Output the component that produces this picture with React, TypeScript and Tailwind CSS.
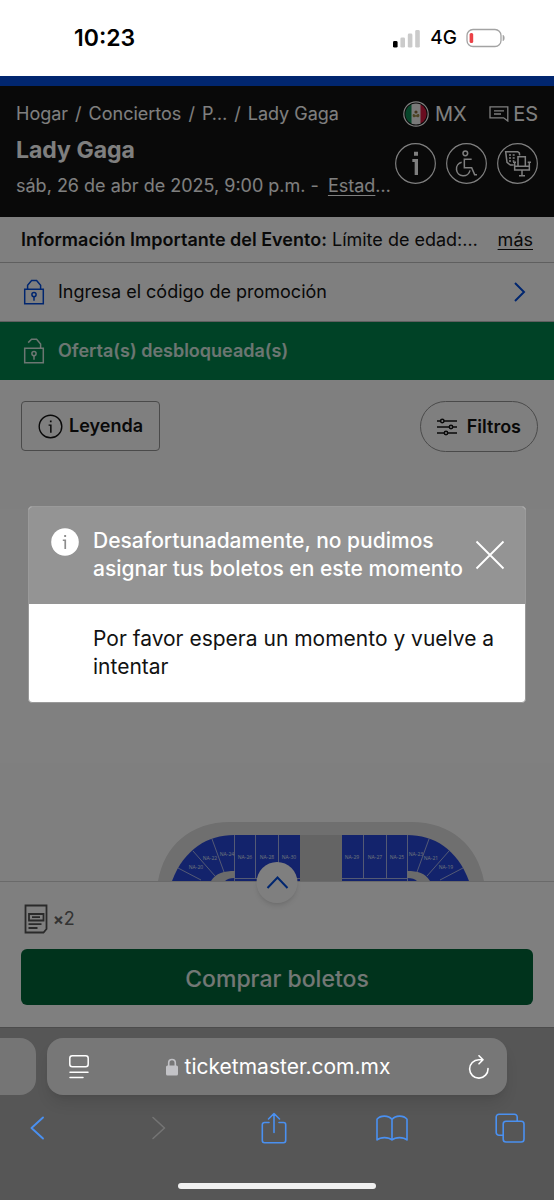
import React from "react";

type IconProps = { className?: string };

function SignalIcon() {
  return (
    <svg className="h-[19px] w-7" viewBox="0 0 28 19" aria-hidden="true">
      <rect x="0" y="12" width="4.6" height="6.6" rx="1.4" fill="#000" />
      <rect x="7.4" y="8.4" width="4.6" height="10.2" rx="1.4" fill="#cbcbcb" />
      <rect x="14.8" y="4.6" width="4.6" height="14" rx="1.4" fill="#cbcbcb" />
      <rect x="22.2" y="1" width="4.6" height="17.6" rx="1.4" fill="#cbcbcb" />
    </svg>
  );
}

function BatteryIcon() {
  return (
    <svg className="h-5 w-10" viewBox="0 0 40 20" aria-hidden="true">
      <rect x="1" y="1.5" width="34" height="17" rx="6" fill="none" stroke="#a3a3a3" strokeWidth="1.3" />
      <path d="M37 7.2c1.7.5 1.7 5.1 0 5.600z" fill="#a3a3a3" stroke="#a3a3a3" strokeWidth=".6" />
      <rect x="3.600" y="5" width="3.600" height="10" rx="1.6" fill="#eb4147" />
    </svg>
  );
}

function FlagIcon() {
  return (
    <svg className="size-[26px]" viewBox="0 0 26 26" aria-hidden="true">
      <defs>
        <clipPath id="flag">
          <circle cx="13" cy="13" r="10.6" />
        </clipPath>
      </defs>
      <circle cx="13" cy="13" r="12.2" fill="#111" stroke="#fff" strokeWidth="1.2" />
      <g clipPath="url(#flag)">
        <rect width="9" height="26" fill="#0f8a55" />
        <rect x="8.500" width="9.500" height="26" fill="#f4f4f4" />
        <rect x="17.500" width="9" height="26" fill="#d3183f" />
        <circle cx="13" cy="11" r="1.600" fill="#8a6a3a" />
        <path d="M9.600 14.500c0-2 2-2 3.400 0 1.400-2 3.400-2 3.400 0s-2 2.200-3.400 1c-1.400 1.200-3.400 1-3.400-1z" fill="#9a8a4a" />
      </g>
    </svg>
  );
}

function ChatIcon() {
  return (
    <svg className="h-4 w-5" viewBox="0 0 20 16" fill="none" stroke="#fff" strokeWidth="1.300" aria-hidden="true">
      <path d="M1 .8h17.800v14.200l-4.200-3.200H1z" />
      <path d="M5 4.800h10M5 8h7" />
    </svg>
  );
}

function InfoSlabIcon() {
  return (
    <svg className="size-[41px]" viewBox="0 0 123 123" aria-hidden="true">
      <circle cx="61.500" cy="61.500" r="59.500" fill="none" stroke="#fff" strokeWidth="3.500" />
      <path d="M57 26h12v12H57zM52 48h17v48H59V57h-7z" fill="#fff" />
    </svg>
  );
}

function WheelchairIcon() {
  return (
    <svg className="size-[41px]" viewBox="0 0 123 123" fill="none" stroke="#fff" strokeWidth="4.500" aria-hidden="true">
      <circle cx="61.500" cy="61.500" r="59.500" strokeWidth="3.500" />
      <circle cx="58" cy="31" r="7" />
      <path d="M77 49H55v25h22l9 21h7" />
      <path d="M47 58A20.500 20.500 0 1 0 72 82" />
    </svg>
  );
}

function SeatIcon() {
  return (
    <svg className="size-[41px]" viewBox="0 0 123 123" fill="none" stroke="#fff" strokeWidth="4.500" aria-hidden="true">
      <circle cx="61.500" cy="61.500" r="59.500" strokeWidth="3.500" />
      <path d="M68 37l-1-7-5-4H26l4 32 10 8h10" />
      <path d="M36 36h6M36 45h6M36 54h6M47 36h6M47 45h6M47 54h5" strokeWidth="5" />
      <path d="M63 70V41h22v29" />
      <path d="M52 70h46M53 58v23h44V58M48 58h9M92 58h10M75 81v17M66 98h18" />
    </svg>
  );
}

function LockIcon({ className }: IconProps) {
  return (
    <svg className={className} viewBox="0 0 22 26" fill="none" stroke="currentColor" strokeWidth="1.500" aria-hidden="true">
      <path d="M1.700 10.200h18.600v14.600H1.700z" />
      <path d="M4.600 10V6.200l4-4.700h5l4 4.700V10" />
      <circle cx="11" cy="15.600" r="2.100" />
      <path d="M11 17.700v4" />
    </svg>
  );
}

function UnlockIcon({ className }: IconProps) {
  return (
    <svg className={className} viewBox="0 0 22 26" fill="none" stroke="currentColor" strokeWidth="1.500" aria-hidden="true">
      <path d="M1.700 10.200h18.600v14.600H1.700z" />
      <path d="M5.200 4.600l3.400-3.300h5l4 4.700v4" />
      <circle cx="11" cy="15.600" r="2.100" />
      <path d="M11 17.700v4" />
    </svg>
  );
}

function Chevron({ className, d, width = 2 }: IconProps & { d: string; width?: number }) {
  return (
    <svg className={className} viewBox="0 0 24 24" fill="none" stroke="currentColor" strokeWidth={width} aria-hidden="true">
      <path d={d} />
    </svg>
  );
}

function StatusBar() {
  return (
    <div className="flex h-[76px] items-center justify-between bg-white pr-12 pl-[74px] text-black">
      <span className="text-[23px] font-semibold">10:23</span>
      <div className="flex items-center gap-[9px]">
        <SignalIcon />
        <span className="text-[19px] font-medium">4G</span>
        <BatteryIcon />
      </div>
    </div>
  );
}

function EventHeader() {
  return (
    <header className="border-t-[10px] border-[#024ddf] bg-[#121212] text-white">
      <div className="flex h-[131px] justify-between px-4 pt-3">
        <div className="min-w-0 flex-1 whitespace-nowrap">
          <nav aria-label="Ruta" className="flex gap-[7px] text-lg leading-8">
            <a href="#hogar">Hogar</a>
            <span>/</span>
            <a href="#conciertos">Conciertos</a>
            <span>/</span>
            <a href="#pop">P…</a>
            <span>/</span>
            <span>Lady Gaga</span>
          </nav>
          <h1 className="text-[23px] leading-10 font-bold">Lady Gaga</h1>
          <p className="text-lg leading-8">
            sáb, 26 de abr de 2025, 9:00 p.m. -{" "}
            <a href="#estadio" className="ml-1 underline underline-offset-3">Estad</a>…
          </p>
        </div>
        <div className="flex shrink-0 flex-col gap-4 pt-[3px]">
          <div className="flex items-center justify-between pl-2 text-xl leading-[26px]">
            <button type="button" className="flex items-center gap-[6px]">
              <FlagIcon />
              MX
            </button>
            <button type="button" className="flex items-center gap-1">
              <ChatIcon />
              ES
            </button>
          </div>
          <div className="flex gap-[10px]">
            <button type="button" aria-label="Información"><InfoSlabIcon /></button>
            <button type="button" aria-label="Accesibilidad"><WheelchairIcon /></button>
            <button type="button" aria-label="Asientos"><SeatIcon /></button>
          </div>
        </div>
      </div>
    </header>
  );
}

const sections = [
  { name: "NA-20", x: 196, y: 869 },
  { name: "NA-22", x: 210, y: 860 },
  { name: "NA-24", x: 227, y: 856 },
  { name: "NA-26", x: 245, y: 859 },
  { name: "NA-28", x: 267, y: 859 },
  { name: "NA-30", x: 289, y: 859 },
  { name: "NA-29", x: 352, y: 859 },
  { name: "NA-27", x: 375, y: 859 },
  { name: "NA-25", x: 397, y: 859 },
  { name: "NA-23", x: 416, y: 856 },
  { name: "NA-21", x: 431, y: 860 },
  { name: "NA-19", x: 446, y: 869 },
];

function VenueMap() {
  return (
    <svg className="block w-full" viewBox="0 819 554 62" role="img" aria-label="Mapa del recinto">
      <path d="M158 881C164 846 190 822 230 822H411C452 822 477 846 484 881z" fill="#dedede" />
      <path d="M300 835h42v46h-42z" fill="#c8c8c8" />
      <path d="M172 881C184 849 208 835 234 835h66v46z" fill="#2746d8" />
      <path d="M469 881C457 849 434 835 407 835h-65v46z" fill="#2746d8" />
      <path d="M211 881C216 873 224 871 235 871v7c-5 0-8 1-10 3z" fill="#d6d6d6" />
      <path d="M430 881C425 873 418 871 407 871v7c5 0 8 1 10 3z" fill="#d6d6d6" />
      <g stroke="#c9d0ee" strokeWidth=".8" fill="none">
        <path d="M178 868l23 12M193 851l22 25M212 839l12 33M234.500 835v46M255.500 835v43M278.500 835v43M235 878.500h65" />
        <path d="M463 868l-23 12M449 851l-22 25M429 839l-12 33M407.500 835v46M386.500 835v43M363.500 835v43M407 878.500h-65" />
      </g>
      <g fill="#dfe3f5" fontSize="5" textAnchor="middle" className="font-['Open_Sans',sans-serif]">
        {sections.map((s) => (
          <text key={s.name} x={s.x} y={s.y}>{s.name}</text>
        ))}
      </g>
    </svg>
  );
}

function PurchasePanel() {
  return (
    <section className="relative border-t border-[#d5d5d5] bg-white px-[21px] pt-[22px] pb-[22px]">
      <button
        type="button"
        aria-label="Mostrar boletos"
        className="absolute -top-5 left-1/2 flex size-[41px] -translate-x-1/2 items-center justify-center rounded-full bg-white text-[#024ddf] shadow-md"
      >
        <Chevron className="size-6" d="M2 17L12 6.500 22 17" />
      </button>
      <div className="flex items-center gap-[5px] pl-[3px] text-[#666]">
        <svg className="h-[30px] w-6" viewBox="0 0 24 30" fill="none" stroke="#555" strokeWidth="1.800" aria-hidden="true">
          <path d="M1.500 1.500h21v23.500l-3 3.500h-18z" />
          <path d="M5 10h14.500v6.500H5zM8 13.200h8M4.500 20.200h13M4.500 24h9" />
        </svg>
        <span className="text-lg leading-[30px]"><b className="text-base">×</b>2</span>
      </div>
      <button type="button" className="mt-[15px] h-14 w-full rounded-md bg-[#006638] pt-1 text-[23px] font-medium text-white/90">
        Comprar boletos
      </button>
    </section>
  );
}

function AlertDialog() {
  return (
    <div className="pointer-events-none fixed inset-0 flex items-center justify-center px-7 pt-2">
      <div role="alertdialog" aria-labelledby="alert-title" aria-describedby="alert-text" className="pointer-events-auto w-full overflow-hidden rounded border border-[#9a9a9a] bg-white">
        <div className="flex bg-[#949494] pt-5 pr-5 pb-[21px] pl-[22px] text-white">
          <svg className="mt-px size-7 shrink-0" viewBox="0 0 28 28" aria-hidden="true">
            <circle cx="14" cy="14" r="13.800" fill="#fff" />
            <path d="M13.200 7h1.900v2h-1.900zM11.800 11.600h3.300V21h-1.700v-8h-1.600z" fill="#8d8d8d" />
          </svg>
          <h2 id="alert-title" className="ml-[14px] flex-1 text-[21px] leading-7 font-medium whitespace-nowrap">
            Desafortunadamente, no pudimos
            <br />
            asignar tus boletos en este momento
          </h2>
          <button type="button" aria-label="Cerrar" className="-ml-4 self-center">
            <svg className="size-[30px]" viewBox="0 0 30 30" fill="none" stroke="#fff" strokeWidth="1.900" aria-hidden="true">
              <path d="M1.500 1.500l27 27M28.500 1.500l-27 27" />
            </svg>
          </button>
        </div>
        <p id="alert-text" className="py-[21px] pr-5 pl-16 text-[21px] leading-7 text-[#121212]">
          Por favor espera un momento y vuelve a intentar
        </p>
      </div>
    </div>
  );
}

function BrowserBar() {
  return (
    <footer className="h-[173px] shrink-0 overflow-hidden border-t border-[#4c4c4c] bg-[#565656] pt-[10px]">
      <div className="flex gap-[11px]">
        <div className="h-[57px] w-9 rounded-r-2xl bg-[#757575]" />
        <div className="flex h-[57px] flex-1 items-center justify-between rounded-2xl bg-[#777] pr-4 pl-[22px] text-white shadow-lg">
          <button type="button" aria-label="Opciones de página">
            <svg className="h-6 w-5" viewBox="0 0 20 24" fill="none" stroke="#fff" strokeWidth="1.500" strokeLinecap="round" aria-hidden="true">
              <rect x=".8" y=".8" width="18.400" height="11" rx="2.500" />
              <path d="M1 17.200h18M1 22.600h13" />
            </svg>
          </button>
          <a href="#ticketmaster" className="flex items-center gap-[7px] text-[21px]">
            <svg className="h-[18px] w-3" viewBox="0 0 12 18" aria-hidden="true">
              <path d="M2.700 8V4.800a3.300 3.300 0 0 1 6.600 0V8" fill="none" stroke="#c2c2c6" strokeWidth="1.600" />
              <rect y="7.500" width="12" height="10" rx="1.500" fill="#c2c2c6" />
            </svg>
            ticketmaster.com.mx
          </a>
          <button type="button" aria-label="Recargar">
            <svg className="h-6 w-6" viewBox="0 0 24 24" fill="none" stroke="#fff" strokeWidth="1.600" strokeLinecap="round" strokeLinejoin="round" aria-hidden="true">
              <path d="M21 13.500a9.200 9.200 0 1 1-9.200-8.800h4M12 .8l4 4-4 4" />
            </svg>
          </button>
        </div>
        <div className="w-9" />
      </div>
      <nav aria-label="Navegador" className="mt-[17px] flex h-8 items-center justify-between pr-7 pl-[21px] text-[#4a90f0]">
        <button type="button" aria-label="Atrás" className="flex w-8 justify-center">
          <svg className="h-6 w-4" viewBox="0 0 16 24" fill="none" stroke="currentColor" strokeWidth="1.900" strokeLinecap="round" strokeLinejoin="round"><path d="M14 1.500L2.500 12 14 22.500" /></svg>
        </button>
        <button type="button" aria-label="Adelante" disabled className="flex w-8 justify-end pr-1 text-[#747474]">
          <svg className="h-6 w-4" viewBox="0 0 16 24" fill="none" stroke="currentColor" strokeWidth="1.600" strokeLinecap="round" strokeLinejoin="round"><path d="M2 1.500L13.500 12 2 22.500" /></svg>
        </button>
        <button type="button" aria-label="Compartir" className="flex w-8 justify-center">
          <svg className="h-8 w-[26px]" viewBox="0 0 26 32" fill="none" stroke="currentColor" strokeWidth="1.600" strokeLinecap="round" strokeLinejoin="round"><path d="M8 10.500H3.500a2.200 2.200 0 0 0-2.200 2.200V28.500a2.200 2.200 0 0 0 2.200 2.200h19a2.200 2.200 0 0 0 2.200-2.200V12.700a2.200 2.200 0 0 0-2.200-2.200H18M13 20.500V1.500M7.500 7L13 1.500 18.500 7" /></svg>
        </button>
        <button type="button" aria-label="Marcadores" className="flex w-8 justify-center">
          <svg className="h-7 w-8" viewBox="0 0 32 28" fill="none" stroke="currentColor" strokeWidth="1.600" strokeLinejoin="round"><path d="M16 5.500C12.500 1 4.500 1 1 5.200V26c3.500-3.200 11.500-3.200 15 0 3.500-3.200 11.500-3.200 15 0V5.200C27.500 1 19.500 1 16 5.500zV26" /></svg>
        </button>
        <button type="button" aria-label="Pestañas" className="flex w-8 justify-center">
          <svg className="size-[30px]" viewBox="0 0 30 30" fill="none" stroke="currentColor" strokeWidth="1.600" strokeLinecap="round" strokeLinejoin="round"><rect x="8.200" y="8.200" width="20.800" height="20.800" rx="2.800" /><path d="M8 22.200H4A2.800 2.800 0 0 1 1.200 19.400V4A2.800 2.800 0 0 1 4 1.200H19.400A2.800 2.800 0 0 1 22.200 4V8" /></svg>
        </button>
      </nav>
      <div className="mx-auto mt-[39px] h-[6px] w-[198px] rounded-full bg-[#f0f0f0]" />
    </footer>
  );
}

export default function App() {
  return (
    <div className="flex min-h-screen flex-col bg-white font-['Inter',sans-serif] text-[#121212]">
      <StatusBar />
      <div className="relative flex flex-1 flex-col">
        <EventHeader />
        <div className="flex h-[46px] items-center justify-between gap-2 border-b border-[#bfbfbf] px-[21px] text-lg whitespace-nowrap">
          <p><b className="font-semibold">Información Importante del Evento:</b> Límite de edad:…</p>
          <a href="#mas" className="underline underline-offset-3">más</a>
        </div>
        <button type="button" className="flex h-[59px] items-center border-b border-[#bfbfbf] px-[23px] text-left text-lg">
          <LockIcon className="h-[26px] w-[22px] text-[#024ddf]" />
          <span className="ml-[13px] flex-1">Ingresa el código de promoción</span>
          <Chevron className="h-6 w-6 text-[#024ddf]" d="M8 3l9 9-9 9" />
        </button>
        <div className="flex h-[58px] items-center bg-[#00844c] px-[23px] text-lg font-semibold text-white/85">
          <UnlockIcon className="h-[26px] w-[22px]" />
          <span className="ml-[13px]">Oferta(s) desbloqueada(s)</span>
        </div>
        <main className="flex min-h-[300px] flex-1 flex-col justify-between">
          <div className="flex items-start justify-between pt-[21px] pr-4 pl-[21px] text-lg font-semibold">
            <button type="button" className="flex h-[50px] items-center gap-[6px] rounded border border-[#949494] px-4">
              <svg className="size-[25px]" viewBox="0 0 25 25" aria-hidden="true">
                <circle cx="12.500" cy="12.500" r="11.300" fill="none" stroke="#121212" strokeWidth="1.400" />
                <path d="M11.900 6.500h1.700v1.800h-1.700zM10.600 10.600h3v8.200h-1.500v-7h-1.500z" fill="#121212" />
              </svg>
              Leyenda
            </button>
            <button type="button" className="flex h-[51px] items-center gap-[10px] rounded-full border border-[#949494] px-4">
              <svg className="size-5" viewBox="0 0 20 20" fill="none" stroke="#121212" strokeWidth="1.500" aria-hidden="true">
                <path d="M0 4h3.500M7 4h13M0 10h12.200M15.800 10H20M0 16h7.200M10.800 16H20" />
                <circle cx="5.300" cy="4" r="1.700" />
                <circle cx="14" cy="10" r="1.700" />
                <circle cx="9" cy="16" r="1.700" />
              </svg>
              Filtros
            </button>
          </div>
          <VenueMap />
        </main>
        <PurchasePanel />
        <div className="pointer-events-none absolute inset-0 bg-black/50" />
      </div>
      <BrowserBar />
      <AlertDialog />
    </div>
  );
}
